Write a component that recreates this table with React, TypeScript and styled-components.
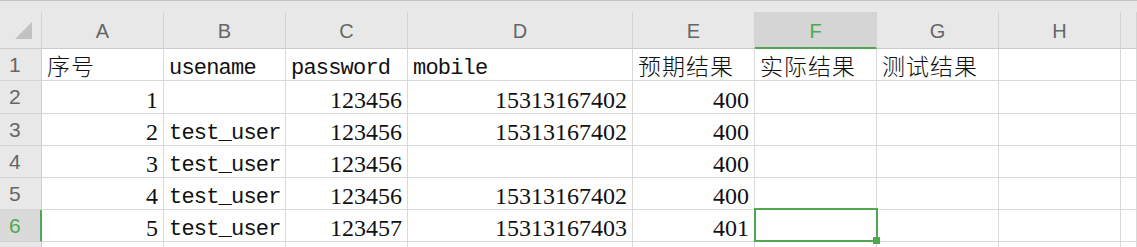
import React from 'react';
import styled, { createGlobalStyle } from 'styled-components';

const GREEN = '#4fa84f';

type Col = { key: string; width: number };

const COLUMNS: Col[] = [
  { key: 'A', width: 122 },
  { key: 'B', width: 122 },
  { key: 'C', width: 122 },
  { key: 'D', width: 225 },
  { key: 'E', width: 122 },
  { key: 'F', width: 122 },
  { key: 'G', width: 122 },
  { key: 'H', width: 122 },
];

const ROW_HEIGHTS = [32, 33, 32, 32, 32, 32];

type Value = string | number;

const DATA: Value[][] = [
  ['序号', 'usename', 'password', 'mobile', '预期结果', '实际结果', '测试结果', ''],
  [1, '', 123456, 15313167402, 400, '', '', ''],
  [2, 'test_user', 123456, 15313167402, 400, '', '', ''],
  [3, 'test_user', 123456, '', 400, '', '', ''],
  [4, 'test_user', 123456, 15313167402, 400, '', '', ''],
  [5, 'test_user', 123457, 15313167403, 401, '', '', ''],
];

const ACTIVE_COL = 5;
const ACTIVE_ROW = 5;

type Kind = 'num' | 'mono' | 'cjk';

const kindOf = (v: Value): Kind => {
  if (typeof v === 'number') return 'num';
  return /[\u4e00-\u9fff]/.test(v) ? 'cjk' : 'mono';
};

function App() {
  return (
    <>
      <GlobalStyle />
      <Sheet>
        <HeaderRow>
          <Corner>
            <Triangle />
          </Corner>
          {COLUMNS.map((c, i) => (
            <ColHeader key={c.key} $width={c.width} $active={i === ACTIVE_COL}>
              {c.key}
            </ColHeader>
          ))}
          <ColHeader $fill />
        </HeaderRow>
        {DATA.map((row, r) => (
          <Row key={r} $height={ROW_HEIGHTS[r]}>
            <RowHeader $active={r === ACTIVE_ROW}>{r + 1}</RowHeader>
            {row.map((v, c) => {
              const kind = kindOf(v);
              return (
                <Cell key={c} $width={COLUMNS[c].width} $kind={kind}>
                  {v !== '' && <CellText $kind={kind}>{v}</CellText>}
                  {r === ACTIVE_ROW && c === ACTIVE_COL && (
                    <Selection>
                      <Handle />
                    </Selection>
                  )}
                </Cell>
              );
            })}
            <Cell $fill $kind="mono" />
          </Row>
        ))}
        <Row $height={10}>
          <RowHeader />
          {COLUMNS.map((c) => (
            <Cell key={c.key} $width={c.width} $kind="mono" />
          ))}
          <Cell $fill $kind="mono" />
        </Row>
      </Sheet>
    </>
  );
}

const GlobalStyle = createGlobalStyle`
  html, body {
    margin: 0;
    padding: 0;
    background: #ffffff;
    overflow: hidden;
  }
`;

const Sheet = styled.div`
  width: 1137px;
  height: 247px;
  overflow: hidden;
  display: flex;
  flex-direction: column;
  background: #ffffff;
`;

const HeaderRow = styled.div`
  display: flex;
  flex: none;
  height: 49px;
  box-sizing: border-box;
  padding-top: 11px;
  border-top: 1px solid #c4c4c4;
  background: #e8e8e8;
`;

const Corner = styled.div`
  position: relative;
  flex: none;
  width: 42px;
  box-sizing: border-box;
  border-right: 1px solid #d3d3d3;
  border-bottom: 1px solid #cbcbcb;
`;

const Triangle = styled.div`
  position: absolute;
  left: 15px;
  top: 10px;
  width: 0;
  height: 0;
  border-style: solid;
  border-width: 0 0 17px 17px;
  border-color: transparent transparent #c2c2c2 transparent;
`;

const ColHeader = styled.div<{ $width?: number; $active?: boolean; $fill?: boolean }>`
  flex: ${(p) => (p.$fill ? '1 1 auto' : 'none')};
  width: ${(p) => (p.$width ? `${p.$width}px` : 'auto')};
  box-sizing: border-box;
  display: flex;
  align-items: center;
  justify-content: center;
  padding-top: 3px;
  border-right: 1px solid #d3d3d3;
  border-bottom: ${(p) => (p.$active ? `2px solid ${GREEN}` : '1px solid #cbcbcb')};
  background: ${(p) => (p.$active ? '#d5d5d5' : 'transparent')};
  color: ${(p) => (p.$active ? GREEN : '#666666')};
  font-family: 'Liberation Sans', Arial, sans-serif;
  font-size: 20px;
`;

const Row = styled.div<{ $height: number }>`
  display: flex;
  flex: none;
  height: ${(p) => p.$height}px;
`;

const RowHeader = styled.div<{ $active?: boolean }>`
  flex: none;
  width: 42px;
  box-sizing: border-box;
  display: flex;
  align-items: center;
  padding-left: 9px;
  background: ${(p) => (p.$active ? '#dadada' : '#e8e8e8')};
  border-right: ${(p) => (p.$active ? `2px solid ${GREEN}` : '1px solid #cfcfcf')};
  border-bottom: 1px solid #d4d4d4;
  color: ${(p) => (p.$active ? GREEN : '#666666')};
  font-family: 'Liberation Sans', Arial, sans-serif;
  font-size: 21px;
`;

const Cell = styled.div<{ $width?: number; $kind: Kind; $fill?: boolean }>`
  position: relative;
  flex: ${(p) => (p.$fill ? '1 1 auto' : 'none')};
  width: ${(p) => (p.$width ? `${p.$width}px` : 'auto')};
  box-sizing: border-box;
  display: flex;
  align-items: flex-end;
  justify-content: ${(p) => (p.$kind === 'num' ? 'flex-end' : 'flex-start')};
  padding: 0 5px 0 5px;
  border-right: 1px solid #d9d9d9;
  border-bottom: 1px solid #d9d9d9;
  overflow: visible;
  white-space: nowrap;
`;

const CellText = styled.span<{ $kind: Kind }>`
  color: #111111;
  ${(p) =>
    p.$kind === 'num'
      ? `
    font-family: 'Liberation Serif', 'Times New Roman', serif;
    font-size: 24px;
    line-height: 24px;
    padding-bottom: 1px;
  `
      : p.$kind === 'mono'
      ? `
    font-family: 'Liberation Mono', 'Courier New', monospace;
    font-size: 22px;
    line-height: 22px;
    letter-spacing: -0.8px;
  `
      : `
    font-family: 'Noto Sans CJK SC', sans-serif;
    font-weight: 300;
    font-size: 23px;
    line-height: 24px;
    letter-spacing: 1px;
    padding-bottom: 3px;
  `}
`;

const Selection = styled.div`
  position: absolute;
  z-index: 2;
  top: -2px;
  left: -1px;
  right: -2px;
  bottom: -1px;
  border: 2px solid ${GREEN};
  pointer-events: none;
`;

const Handle = styled.div`
  position: absolute;
  right: -4px;
  bottom: -4px;
  width: 7px;
  height: 7px;
  background: ${GREEN};
`;

export default App;
